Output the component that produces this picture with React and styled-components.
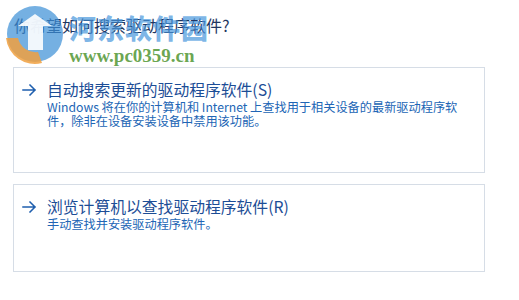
import React from "react";
import styled, { createGlobalStyle } from "styled-components";

const GlobalStyle = createGlobalStyle`
  html, body {
    margin: 0;
    padding: 0;
    background: #fff;
  }
  body {
    font-family: "Noto Sans CJK SC", "Microsoft YaHei", sans-serif;
  }
`;

const options = [
  {
    title: "自动搜索更新的驱动程序软件(S)",
    desc: "Windows 将在你的计算机和 Internet 上查找用于相关设备的最新驱动程序软件，除非在设备安装设备中禁用该功能。",
    height: 106,
  },
  {
    title: "浏览计算机以查找驱动程序软件(R)",
    desc: "手动查找并安装驱动程序软件。",
    height: 88,
  },
];

const Arrow = () => (
  <svg width="15" height="12" viewBox="0 0 15 12" fill="none">
    <path
      d="M1 6h12M8 1l5 5-5 5"
      stroke="#1f5fae"
      strokeWidth="1.5"
      strokeLinecap="square"
    />
  </svg>
);

const Logo = () => (
  <svg width="66" height="62" viewBox="0 0 66 62">
    <circle cx="33" cy="30" r="28" fill="#3b8fd6" opacity="0.7" />
    <path d="M4 34 A29 29 0 0 0 40 59 L36 48 A18 18 0 0 1 16 34 Z" fill="#f0a040" opacity="0.85" />
    <path d="M16 22 L33 10 L50 22 L41 22 L41 46 L26 46 L26 22 Z" fill="#fff" opacity="0.9" />
  </svg>
);

const App = () => {
  return (
    <Page>
      <GlobalStyle />
      <Heading>你希望如何搜索驱动程序软件?</Heading>
      <List>
        {options.map((o) => (
          <Card key={o.title} $h={o.height}>
            <TitleRow>
              <Arrow />
              <CardTitle>{o.title}</CardTitle>
            </TitleRow>
            <Desc>{o.desc}</Desc>
          </Card>
        ))}
      </List>
      <Watermark>
        <Logo />
        <MarkText>
          <MarkName>河东软件园</MarkName>
          <MarkUrl>www.pc0359.cn</MarkUrl>
        </MarkText>
      </Watermark>
    </Page>
  );
};

const Page = styled.div`
  position: relative;
  width: 519px;
  height: 300px;
  background: #fff;
  padding: 14px 34px 0 13px;
  box-sizing: border-box;
  overflow: hidden;
`;

const Heading = styled.h1`
  margin: 0 0 0 1px;
  font-size: 16px;
  font-weight: 400;
  line-height: 22px;
  color: #1e3560;
`;

const List = styled.div`
  display: flex;
  flex-direction: column;
  gap: 11px;
  margin-top: 31px;
`;

const Card = styled.div`
  height: ${(p) => p.$h}px;
  border: 1px solid #d6dde6;
  box-sizing: border-box;
  padding: 10px 25px 0 8px;
`;

const TitleRow = styled.div`
  display: flex;
  align-items: center;
  gap: 10px;
`;

const CardTitle = styled.div`
  font-size: 15.8px;
  line-height: 23px;
  color: #1c4d96;
`;

const Desc = styled.div`
  margin: 0 0 0 25px;
  font-size: 12.2px;
  line-height: 13.5px;
  line-break: anywhere;
  color: #2165b5;
`;

const Watermark = styled.div`
  position: absolute;
  left: 2px;
  top: 4px;
  display: flex;
  align-items: flex-start;
  gap: 1px;
  pointer-events: none;
`;

const MarkText = styled.div`
  display: flex;
  flex-direction: column;
  padding-top: 6px;
`;

const MarkName = styled.div`
  font-family: "Noto Sans CJK SC", sans-serif;
  font-weight: 900;
  font-size: 27px;
  line-height: 36px;
  letter-spacing: 1px;
  color: rgba(70, 150, 220, 0.7);
`;

const MarkUrl = styled.div`
  font-family: "Liberation Serif", serif;
  font-weight: 700;
  font-size: 19px;
  line-height: 20px;
  color: rgba(80, 150, 50, 0.85);
`;

export default App;
